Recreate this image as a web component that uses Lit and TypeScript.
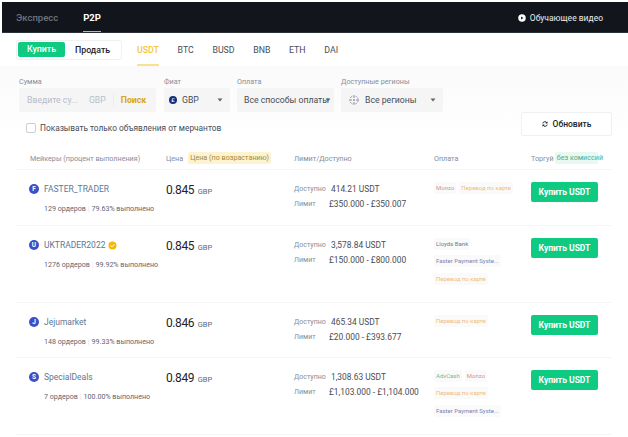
import { LitElement, css, html } from 'lit';
import { customElement } from 'lit/decorators.js';

interface Tag {
  label: string;
  kind: 'monzo' | 'card' | 'bank' | 'fps' | 'adv';
}

interface Offer {
  letter: string;
  name: string;
  verified?: boolean;
  orders: string;
  done: string;
  price: string;
  avail: string;
  limit: string;
  tags: Tag[][];
  height: number;
}

const monzo: Tag = { label: 'Monzo', kind: 'monzo' };
const card: Tag = { label: 'Перевод по карте', kind: 'card' };
const lloyds: Tag = { label: 'Lloyds Bank', kind: 'bank' };
const fps: Tag = { label: 'Faster Payment Syste...', kind: 'fps' };
const adv: Tag = { label: 'AdvCash', kind: 'adv' };

const OFFERS: Offer[] = [
  {
    letter: 'F',
    name: 'FASTER_TRADER',
    orders: '129 ордеров',
    done: '79.63% выполнено',
    price: '0.845',
    avail: '414.21 USDT',
    limit: '£350.000 - £350.007',
    tags: [[monzo, card]],
    height: 56,
  },
  {
    letter: 'U',
    name: 'UKTRADER2022',
    verified: true,
    orders: '1276 ордеров',
    done: '99.92% выполнено',
    price: '0.845',
    avail: '3,578.84 USDT',
    limit: '£150.000 - £800.000',
    tags: [[lloyds], [fps], [card]],
    height: 77,
  },
  {
    letter: 'J',
    name: 'Jejumarket',
    orders: '148 ордеров',
    done: '99.33% выполнено',
    price: '0.846',
    avail: '465.34 USDT',
    limit: '£20.000 - £393.677',
    tags: [[card]],
    height: 55,
  },
  {
    letter: 'S',
    name: 'SpecialDeals',
    orders: '7 ордеров',
    done: '100.00% выполнено',
    price: '0.849',
    avail: '1,308.63 USDT',
    limit: '£1,103.000 - £1,104.000',
    tags: [[adv, monzo], [card], [fps]],
    height: 77,
  },
];

const caret = html`<svg class="caret" width="6" height="4" viewBox="0 0 6 4"><path d="M0.5 0.5h5L3 3.5z" fill="#5e6673" /></svg>`;

@customElement('app-root')
export class AppRoot extends LitElement {
  static override styles = css`
    :host {
      display: block;
      width: 628px;
      height: 437px;
      overflow: hidden;
      background: #fff;
      font-family: 'Roboto', 'Liberation Sans', sans-serif;
      color: #1e2329;
      padding-top: 2px;
      box-sizing: border-box;
    }
    .nav {
      margin-left: 2px;
      height: 31px;
      background: #12161c;
      display: flex;
      align-items: stretch;
      padding: 0 25px 0 14px;
      font-size: 9.5px;
      border-bottom: 1px solid #2b3139;
      box-sizing: border-box;
    }
    .nav-tab {
      display: flex;
      align-items: center;
      color: #6f747c;
      font-weight: 500;
      margin-right: 25px;
    }
    .nav-tab.on {
      color: #fff;
      font-weight: 700;
      box-shadow: inset 0 -1px 0 #f0b90b;
    }
    .video {
      margin-left: auto;
      display: flex;
      align-items: center;
      gap: 4px;
      color: #eaecef;
      font-size: 8.5px;
      padding-top: 1px;
    }
    .tabs {
      height: 33px;
      display: flex;
      align-items: center;
      padding-left: 16px;
      box-sizing: border-box;
      font-size: 8.8px;
      color: #474d57;
    }
    .seg {
      width: 106px;
      height: 20px;
      box-sizing: border-box;
      border: 1px solid #f0f1f2;
      border-radius: 2px;
      padding: 1px;
      display: flex;
      align-items: center;
      font-weight: 500;
      margin-right: 15px;
    }
    .seg span {
      flex: 0 0 47px;
      height: 15px;
      line-height: 15px;
      text-align: center;
      background: #0ecb81;
      color: #fff;
      border-radius: 2px;
      font-weight: 500;
    }
    .seg b {
      font-weight: 500;
      margin-left: 10px;
      color: #1e2329;
    }
    .coin {
      height: 33px;
      line-height: 34px;
      margin-right: 18.6px;
      box-sizing: border-box;
    }
    .coin.on {
      color: #f0b90b;
      opacity: 0.8;
      font-weight: 500;
      box-shadow: inset 0 -2px 0 #f8d978;
    }
    .filters {
      height: 71px;
      padding: 11px 16px 0 19px;
      box-sizing: border-box;
      background: linear-gradient(#fafafa, #fff);
    }
    .controls {
      display: flex;
      gap: 7px;
    }
    .field label {
      display: block;
      height: 11px;
      line-height: 9px;
      font-size: 7.2px;
      color: #848e9c;
    }
    .box {
      height: 24px;
      background: #f5f5f5;
      border-radius: 2px;
      display: flex;
      align-items: center;
      font-size: 8.7px;
      color: #474d57;
      box-sizing: border-box;
      white-space: nowrap;
    }
    .amount {
      width: 137px;
      padding-left: 8px;
      color: #b7bdc6;
      margin-right: 1px;
    }
    .amount .cur {
      margin-left: 11px;
      padding-right: 7px;
      border-right: 1px solid #eaecef;
      line-height: 14px;
    }
    .amount .go {
      margin-left: 7px;
      color: #d9a514;
      font-weight: 700;
    }
    .fiat {
      width: 66px;
      padding-left: 5px;
      gap: 5px;
    }
    .flag {
      width: 8px;
      height: 8px;
      border-radius: 50%;
      background: #12307f;
      color: #fff;
      font-size: 6px;
      line-height: 8px;
      text-align: center;
    }
    .caret {
      margin-left: auto;
      margin-right: 7px;
      flex: none;
    }
    .pay {
      width: 97px;
      padding-left: 7px;
    }
    /* the long label runs under the caret, as it does on the real page */
    .pay .caret {
      margin: 0 0 0 -4px;
    }
    .region {
      width: 102px;
      padding-left: 8px;
      gap: 6px;
    }
    .row2 {
      display: flex;
      justify-content: space-between;
      align-items: flex-start;
      padding-left: 7px;
    }
    .check {
      display: flex;
      align-items: center;
      gap: 4px;
      margin-top: 11px;
      font-size: 8.3px;
      color: #474d57;
    }
    .check i {
      width: 10px;
      height: 10px;
      box-sizing: border-box;
      border: 1px solid #c9ced6;
      border-radius: 2px;
      background: #fff;
    }
    .refresh {
      width: 91px;
      height: 24px;
      box-sizing: border-box;
      background: #fff;
      border: 1px solid #f0f1f2;
      border-radius: 2px;
      display: flex;
      align-items: center;
      justify-content: center;
      gap: 5px;
      font-size: 8.5px;
      font-weight: 500;
      color: #1e2329;
    }
    .table {
      margin: 0 16px;
    }
    .cols {
      display: grid;
      grid-template-columns: 150px 128px 140px 97px 1fr;
    }
    .head {
      height: 33px;
      align-items: center;
      font-size: 7.2px;
      color: #848e9c;
      border-bottom: 1px solid #f5f5f5;
      box-sizing: border-box;
      padding-top: 10px;
    }
    .head > div:first-child {
      padding-left: 14px;
    }
    .head .inline {
      display: flex;
      align-items: center;
      gap: 5px;
      white-space: nowrap;
    }
    .sort {
      background: #fdf3d1;
      color: #a98a2c;
      padding: 0 2px;
      height: 12px;
      line-height: 12px;
      border-radius: 2px;
    }
    /* text is wider than its fixed pill in the reference */
    .free {
      width: 43px;
      box-sizing: border-box;
      background: #e7f9f1;
      color: #4fae89;
      padding: 0 2px;
      height: 12px;
      line-height: 12px;
      border-radius: 2px;
      margin-left: -4px;
    }
    .offer {
      border-bottom: 1px solid #f5f5f5;
      box-sizing: border-box;
      padding-top: 11px;
    }
    .maker {
      padding-left: 13px;
    }
    .who {
      display: flex;
      align-items: center;
      height: 14px;
      margin-top: 1px;
      font-size: 8.5px;
      color: #5b7796;
    }
    .ava {
      width: 10px;
      height: 10px;
      border-radius: 50%;
      background: #3d4fc4;
      color: #fff;
      font-size: 6.5px;
      font-weight: 700;
      line-height: 10px;
      text-align: center;
      margin-right: 5px;
    }
    .who svg {
      margin-left: 3px;
    }
    .stats {
      margin: 8px 0 0 15px;
      font-size: 7.1px;
      color: #5e6673;
      white-space: nowrap;
    }
    .stats u {
      text-decoration: none;
      color: #e0e3e8;
      margin: 0 2px;
    }
    .price {
      font-size: 12px;
      line-height: 18px;
      color: #1e2329;
      letter-spacing: -0.4px;
    }
    .price small {
      font-size: 7.5px;
      letter-spacing: 0;
      color: #5e6673;
      margin-left: 1px;
    }
    .lim > div {
      display: flex;
      height: 15px;
      align-items: center;
      font-size: 8.4px;
      color: #474d57;
      white-space: nowrap;
    }
    .lim label {
      font-size: 7px;
      color: #848e9c;
      width: 37px;
    }
    .lim label.short {
      width: 35px;
    }
    .tags {
      display: flex;
      flex-direction: column;
      gap: 5.3px;
      align-items: flex-start;
      padding-top: 1px;
    }
    .line {
      display: flex;
      gap: 3px;
    }
    .tag {
      height: 12px;
      line-height: 12px;
      padding: 0 2px;
      font-size: 6px;
      background: #fafafa;
      border-radius: 2px;
      white-space: nowrap;
    }
    .tag.monzo {
      color: #d98f8f;
    }
    .tag.card {
      color: #f0bc79;
    }
    .tag.bank {
      color: #6b7a86;
    }
    .tag.fps {
      color: #7b84b3;
    }
    .tag.adv {
      color: #6fb893;
    }
    .buy {
      width: 67px;
      height: 20px;
      line-height: 20px;
      margin-top: 1px;
      text-align: center;
      background: #0ecb81;
      color: #fff;
      font-size: 8.5px;
      font-weight: 700;
      border-radius: 2px;
    }
  `;

  private renderOffer(o: Offer) {
    return html`
      <div class="cols offer" style="height:${o.height}px">
        <div class="maker">
          <div class="who">
            <span class="ava">${o.letter}</span>${o.name}
            ${o.verified
              ? html`<svg width="9" height="9" viewBox="0 0 9 9">
                  <circle cx="4.5" cy="4.5" r="4" fill="#f0b90b" />
                  <path d="M2.6 4.6l1.4 1.3 2.4-2.6" fill="none" stroke="#fff" stroke-width="1" />
                </svg>`
              : ''}
          </div>
          <div class="stats">${o.orders}<u>|</u>${o.done}</div>
        </div>
        <div class="price">${o.price} <small>GBP</small></div>
        <div class="lim">
          <div><label>Доступно</label>${o.avail}</div>
          <div><label class="short">Лимит</label>${o.limit}</div>
        </div>
        <div class="tags">
          ${o.tags.map(
            (line) => html`<div class="line">
              ${line.map((t) => html`<span class="tag ${t.kind}">${t.label}</span>`)}
            </div>`,
          )}
        </div>
        <div><div class="buy">Купить USDT</div></div>
      </div>
    `;
  }

  override render() {
    return html`
      <div class="nav">
        <div class="nav-tab">Экспресс</div>
        <div class="nav-tab on">P2P</div>
        <div class="video">
          <svg width="8" height="8" viewBox="0 0 9 9">
            <circle cx="4.5" cy="4.5" r="4.2" fill="#fff" />
            <path d="M3.5 2.8l2.6 1.7-2.6 1.7z" fill="#12161c" />
          </svg>
          Обучающее видео
        </div>
      </div>

      <div class="tabs">
        <div class="seg"><span>Купить</span><b>Продать</b></div>
        ${['USDT', 'BTC', 'BUSD', 'BNB', 'ETH', 'DAI'].map(
          (c, i) => html`<div class="coin ${i === 0 ? 'on' : ''}">${c}</div>`,
        )}
      </div>

      <div class="filters">
        <div class="controls">
          <div class="field">
            <label>Сумма</label>
            <div class="box amount">
              <span>Введите су...</span><span class="cur">GBP</span><span class="go">Поиск</span>
            </div>
          </div>
          <div class="field">
            <label>Фиат</label>
            <div class="box fiat"><span class="flag">£</span>GBP${caret}</div>
          </div>
          <div class="field">
            <label>Оплата</label>
            <div class="box pay"><span>Все способы оплаты</span>${caret}</div>
          </div>
          <div class="field">
            <label>Доступные регионы</label>
            <div class="box region">
              <svg width="10" height="10" viewBox="0 0 10 10" fill="none" stroke="#848e9c" stroke-width="0.9" stroke-dasharray="2 1">
                <circle cx="5" cy="5" r="4.2" />
                <path d="M5 1v8M1 5h8" />
              </svg>
              Все регионы${caret}
            </div>
          </div>
        </div>
        <div class="row2">
          <div class="check"><i></i>Показывать только объявления от мерчантов</div>
          <div class="refresh">
            <svg width="6" height="6" viewBox="0 0 8 8" fill="none" stroke="#1e2329" stroke-width="1.3">
              <path d="M1 3.2A3 3 0 0 1 6.6 2.6M7 4.8A3 3 0 0 1 1.4 5.4" />
              <path d="M7 .8v2.2H4.8M1 7.2V5h2.2" stroke-width="0.9" />
            </svg>
            Обновить
          </div>
        </div>
      </div>

      <div class="table">
        <div class="cols head">
          <div>Мейкеры (процент выполнения)</div>
          <div class="inline">Цена <span class="sort">Цена (по возрастанию)</span></div>
          <div>Лимит/Доступно</div>
          <div>Оплата</div>
          <div class="inline">Торгуй <span class="free">без комиссий</span></div>
        </div>
        ${OFFERS.map((o) => this.renderOffer(o))}
      </div>
    `;
  }
}

declare global {
  interface HTMLElementTagNameMap {
    'app-root': AppRoot;
  }
}
